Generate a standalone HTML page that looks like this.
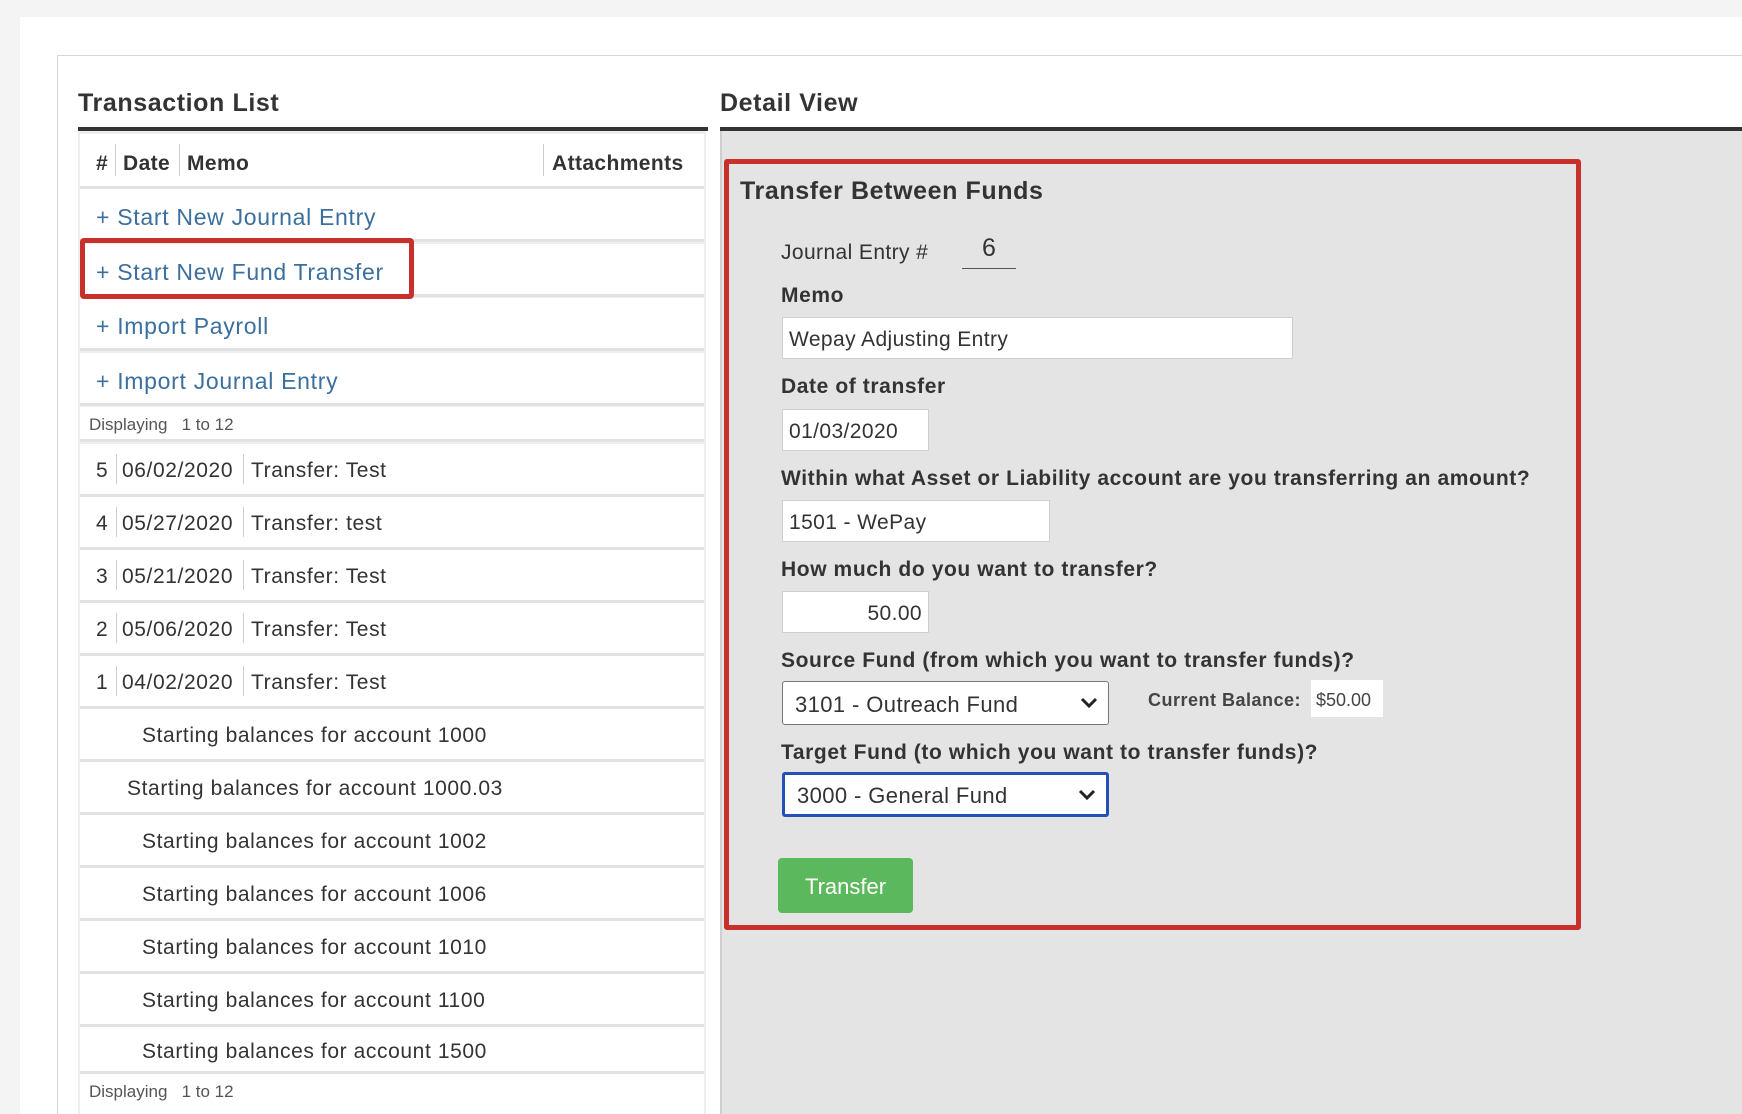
<!DOCTYPE html>
<html><head><meta charset="utf-8"><style>
*{box-sizing:border-box;margin:0;padding:0}
body{width:1742px;height:1114px;overflow:hidden;background:#f4f4f4;font-family:"Liberation Sans",sans-serif;color:#333;position:relative}
.a{position:absolute}
.card{left:20px;top:17px;width:1722px;height:1097px;background:#fff}
.panel{left:57px;top:55px;width:1685px;height:1059px;border:1px solid #d6d6d6;border-right:none;border-bottom:none}
.h{font-size:25px;color:#333;font-weight:600;letter-spacing:0.6px}
.rule{height:4px;background:#333}
.row{left:80px;width:624px;background:#fff;border-bottom:3px solid #e2e2e2;font-size:21px;letter-spacing:0.6px}
.lk{color:#3b6f9e;font-size:23px;padding-left:16px;line-height:56px;letter-spacing:0.7px}
.sep{position:absolute;top:10px;bottom:10px;width:1px;background:#ccc}
.lbl{font-size:21px;font-weight:600;color:#333;left:781px;letter-spacing:0.6px}
.inp{background:#fff;border:1px solid #cfcfcf;font-size:21px;padding-left:6px;display:flex;align-items:center;left:782px;letter-spacing:0.4px;padding-top:3px}
.sel{background:#fff;border:1px solid #777;border-radius:3px;font-size:22px;padding-left:12px;display:flex;align-items:center;left:782px;width:327px;letter-spacing:0.4px;padding-top:3px}
.sel svg{position:absolute;right:10px;top:50%;margin-top:-6px}
</style></head><body>
<div class="a card"></div>
<div class="a panel"></div>
<div class="a h" style="left:78px;top:89px">Transaction List</div>
<div class="a rule" style="left:78px;top:127px;width:630px"></div>
<div class="a h" style="left:720px;top:89px">Detail View</div>
<div class="a rule" style="left:720px;top:127px;width:1022px"></div>
<div class="a" style="left:720px;top:131px;width:1022px;height:983px;background:#e4e4e4;border-left:2px solid #cfcfcf"></div>
<div class="a" style="left:78px;top:131px;width:628px;height:983px;background:#eee"></div>

<div class="a row" style="top:134px;height:55px;font-weight:600;font-size:21px;letter-spacing:0.4px">
 <span class="a" style="left:16px;top:18px">#</span><div class="sep" style="left:35px"></div>
 <span class="a" style="left:43px;top:18px">Date</span><div class="sep" style="left:99px"></div>
 <span class="a" style="left:107px;top:18px">Memo</span><div class="sep" style="left:463px"></div>
 <span class="a" style="left:472px;top:18px">Attachments</span></div>
<div class="a row lk" style="top:189px;height:53px">+ Start New Journal Entry</div>
<div class="a row lk" style="top:244px;height:53px">+ Start New Fund Transfer</div>
<div class="a row lk" style="top:298px;height:53px">+ Import Payroll</div>
<div class="a row lk" style="top:353px;height:53px">+ Import Journal Entry</div>
<div class="a row" style="top:407px;height:35px;font-size:17px;color:#555;padding:8px 9px;letter-spacing:0">Displaying&nbsp;&nbsp; 1 to 12</div>

<div class="a row" style="top:444px;height:53px"><span class="a" style="left:16px;top:15px">5</span><div class="sep" style="left:36px"></div><span class="a" style="left:42px;top:15px">06/02/2020</span><div class="sep" style="left:163px"></div><span class="a" style="left:171px;top:15px">Transfer: Test</span></div>
<div class="a row" style="top:497px;height:53px"><span class="a" style="left:16px;top:15px">4</span><div class="sep" style="left:36px"></div><span class="a" style="left:42px;top:15px">05/27/2020</span><div class="sep" style="left:163px"></div><span class="a" style="left:171px;top:15px">Transfer: test</span></div>
<div class="a row" style="top:550px;height:53px"><span class="a" style="left:16px;top:15px">3</span><div class="sep" style="left:36px"></div><span class="a" style="left:42px;top:15px">05/21/2020</span><div class="sep" style="left:163px"></div><span class="a" style="left:171px;top:15px">Transfer: Test</span></div>
<div class="a row" style="top:603px;height:53px"><span class="a" style="left:16px;top:15px">2</span><div class="sep" style="left:36px"></div><span class="a" style="left:42px;top:15px">05/06/2020</span><div class="sep" style="left:163px"></div><span class="a" style="left:171px;top:15px">Transfer: Test</span></div>
<div class="a row" style="top:656px;height:53px"><span class="a" style="left:16px;top:15px">1</span><div class="sep" style="left:36px"></div><span class="a" style="left:42px;top:15px">04/02/2020</span><div class="sep" style="left:163px"></div><span class="a" style="left:171px;top:15px">Transfer: Test</span></div>
<div class="a row" style="top:709px;height:53px;padding:15px 0 0 62px">Starting balances for account 1000</div>
<div class="a row" style="top:762px;height:53px;padding:15px 0 0 47px">Starting balances for account 1000.03</div>
<div class="a row" style="top:815px;height:53px;padding:15px 0 0 62px">Starting balances for account 1002</div>
<div class="a row" style="top:868px;height:53px;padding:15px 0 0 62px">Starting balances for account 1006</div>
<div class="a row" style="top:921px;height:53px;padding:15px 0 0 62px">Starting balances for account 1010</div>
<div class="a row" style="top:974px;height:53px;padding:15px 0 0 62px">Starting balances for account 1100</div>
<div class="a row" style="top:1027px;height:47px;padding:13px 0 0 62px">Starting balances for account 1500</div>
<div class="a row" style="top:1074px;height:40px;font-size:17px;color:#555;padding:8px 9px;border:none;letter-spacing:0">Displaying&nbsp;&nbsp; 1 to 12</div>

<div class="a" style="left:80px;top:238px;width:334px;height:61px;border:5px solid #c8302b;border-radius:4px"></div>

<div class="a" style="left:724px;top:159px;width:857px;height:771px;border:5px solid #c8302b;border-radius:3px"></div>
<div class="a h" style="left:740px;top:177px">Transfer Between Funds</div>
<div class="a" style="left:781px;top:241px;font-size:21px;letter-spacing:0.4px">Journal Entry #</div>
<div class="a" style="left:962px;top:234px;width:54px;height:35px;border-bottom:1px solid #555;text-align:center;font-size:25px">6</div>
<div class="a lbl" style="top:284px">Memo</div>
<div class="a inp" style="top:317px;width:511px;height:42px">Wepay Adjusting Entry</div>
<div class="a lbl" style="top:375px">Date of transfer</div>
<div class="a inp" style="top:409px;width:147px;height:42px">01/03/2020</div>
<div class="a lbl" style="top:467px">Within what Asset or Liability account are you transferring an amount?</div>
<div class="a inp" style="top:500px;width:268px;height:42px">1501 - WePay</div>
<div class="a lbl" style="top:558px">How much do you want to transfer?</div>
<div class="a inp" style="top:591px;width:147px;height:42px;justify-content:flex-end;padding-right:6px">50.00</div>
<div class="a lbl" style="top:649px">Source Fund (from which you want to transfer funds)?</div>
<div class="a sel" style="top:681px;height:44px">3101 - Outreach Fund<svg width="18" height="12" viewBox="0 0 18 12"><path d="M2 2l7 7 7-7" fill="none" stroke="#222" stroke-width="3"/></svg></div>
<div class="a" style="left:1148px;top:690px;font-size:18px;font-weight:600;color:#444;letter-spacing:0.5px">Current Balance:</div>
<div class="a" style="left:1311px;top:680px;width:72px;height:37px;background:#fff;font-size:18px;padding:10px 5px 0;color:#444">$50.00</div>
<div class="a lbl" style="top:741px">Target Fund (to which you want to transfer funds)?</div>
<div class="a sel" style="top:772px;height:45px;border:3px solid #2450b8">3000 - General Fund<svg width="18" height="12" viewBox="0 0 18 12"><path d="M2 2l7 7 7-7" fill="none" stroke="#222" stroke-width="3"/></svg></div>
<div class="a" style="left:778px;top:858px;width:135px;height:55px;background:#5cb85c;border-radius:4px;color:#fff;font-size:22px;text-align:center;line-height:57px">Transfer</div>
</body></html>
